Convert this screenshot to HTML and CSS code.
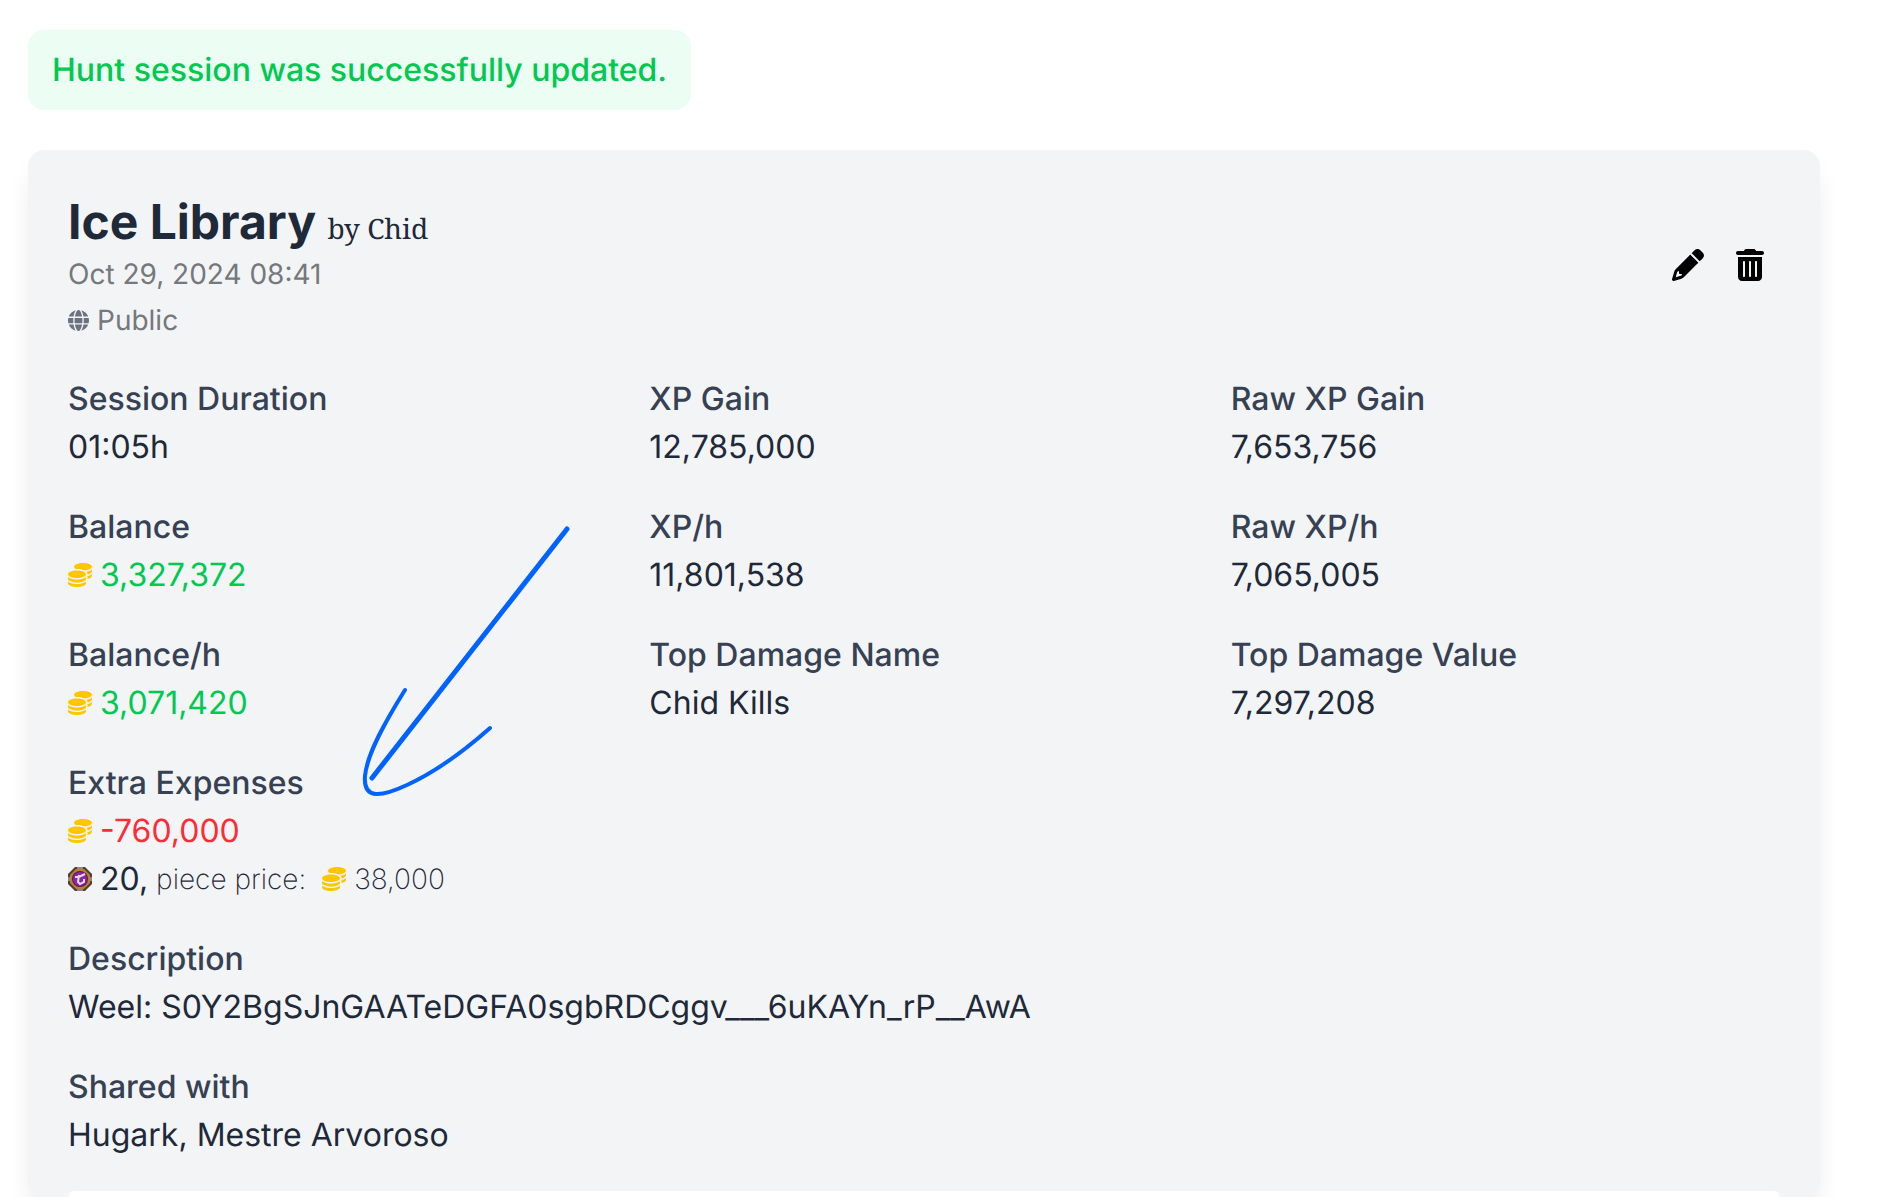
FILE: index.html
```html
<!DOCTYPE html>
<html lang="en">
<head>
    <meta charset="UTF-8">
    <meta name="viewport" content="width=device-width, initial-scale=1.0">
    <title>Ice Library - Hunt Session</title>
    <link rel="stylesheet" href="styles.css">
</head>
<body>
    <!-- Shared icon shapes -->
    <svg class="sprite" aria-hidden="true">
        <symbol id="coins" viewBox="0 0 512 512">
            <path d="M512 80c0 18-14.3 34.6-38.4 48c-29.1 16.1-72.5 27.5-122.3 30.9c-3.7-1.8-7.4-3.5-11.3-5C300.6 137.4 248.2 128 192 128c-8.3 0-16.4 .2-24.5 .6l-1.1-.6C142.3 114.6 128 98 128 80c0-44.2 86-80 192-80S512 35.8 512 80zM160.7 161.1c10.2-.7 20.7-1.1 31.3-1.1c62.2 0 117.4 12.3 152.5 31.4C369.3 204.9 384 221.7 384 240c0 4-.7 7.9-2.1 11.7c-4.6 13.2-17 25.3-35 35.5c-.4 .3-.9 .5-1.3 .7c-35 19.4-90.8 32-153.6 32c-59.6 0-112.9-11.3-148.2-29.1c-1.9-.9-3.7-1.9-5.5-2.9C14.3 274.6 0 258 0 240c0-34.8 53.4-64.5 128-75.4c10.5-1.5 21.4-2.7 32.7-3.5zM416 240c0-21.9-10.6-39.9-24.1-53.4c28.3-4.4 54.2-11.4 76.2-20.5c16.3-6.8 31.5-15.2 43.9-25.5V176c0 19.3-16.5 37.1-43.8 50.9c-14.6 7.4-32.4 13.7-52.4 18.5c.1-1.8 .2-3.5 .2-5.3zm-32 96c0 18-14.3 34.6-38.4 48c-1.8 1-3.6 1.9-5.5 2.9C304.9 404.7 251.6 416 192 416c-62.8 0-118.6-12.6-153.6-32C14.3 370.6 0 354 0 336V300.6c12.5 10.3 27.6 18.7 43.9 25.5C83.4 342.6 135.8 352 192 352s108.6-9.4 148.1-25.9c7.8-3.2 15.3-6.9 22.4-10.9c6.1-3.4 11.8-7.2 17.2-11.2c1.5-1.1 2.9-2.3 4.3-3.4V336zm32 0V278.1c19-4.2 36.5-9.5 52.1-16c16.3-6.8 31.5-15.2 43.9-25.5V272c0 10.5-5 21-14.9 30.9c-16.3 16.3-45 29.7-81.3 38.4c.1-1.7 .2-3.5 .2-5.3zM192 448c56.2 0 108.6-9.4 148.1-25.9c16.3-6.8 31.5-15.2 43.9-25.5V432c0 44.2-86 80-192 80S0 476.2 0 432V396.6c12.5 10.3 27.6 18.7 43.9 25.5C83.4 438.6 135.8 448 192 448z"/>
        </symbol>
    </svg>

    <p class="notice" role="status">Hunt session was successfully updated.</p>

    <main class="card">
        <header class="card-header">
            <div>
                <h1>Ice Library <small>by Chid</small></h1>
                <p class="date">Oct 29, 2024 08:41</p>
                <p class="visibility">
                    <svg class="icon-globe" viewBox="0 0 512 512" aria-hidden="true"><path d="M352 256c0 22.2-1.2 43.6-3.3 64H163.3c-2.2-20.4-3.3-41.8-3.3-64s1.2-43.6 3.3-64H348.7c2.2 20.4 3.3 41.8 3.3 64zm28.8-64H503.9c5.3 20.5 8.1 41.9 8.1 64s-2.8 43.5-8.1 64H380.8c2.1-20.6 3.2-42 3.2-64s-1.1-43.4-3.2-64zm112.6-32H376.7c-10-63.9-29.8-117.4-55.3-151.6c78.3 20.7 142 77.5 171.9 151.6zm-149.1 0H167.7c6.1-36.4 15.5-68.6 27-94.7c10.5-23.6 22.2-40.7 33.5-51.5C239.4 3.2 248.7 0 256 0s16.6 3.2 27.8 13.8c11.3 10.8 23 27.9 33.5 51.5c11.6 26 20.9 58.2 27 94.7zm-209 0H18.6C48.6 85.9 112.2 29.1 190.6 8.4C165.1 42.6 145.3 96.1 135.3 160zM8.1 192H131.2c-2.1 20.6-3.2 42-3.2 64s1.1 43.4 3.2 64H8.1C2.8 299.5 0 278.1 0 256s2.8-43.5 8.1-64zM194.7 446.6c-11.6-26-20.9-58.2-27-94.6H344.3c-6.1 36.4-15.5 68.6-27 94.6c-10.5 23.6-22.2 40.7-33.5 51.5C272.6 508.8 263.3 512 256 512s-16.6-3.2-27.8-13.8c-11.3-10.8-23-27.9-33.5-51.5zM135.3 352c10 63.9 29.8 117.4 55.3 151.6C112.2 482.9 48.6 426.1 18.6 352H135.3zm358.1 0c-30 74.1-93.6 130.9-171.9 151.6c25.5-34.2 45.2-87.7 55.3-151.6H493.4z"/></svg>
                    Public
                </p>
            </div>
            <div class="actions">
                <a href="#edit" aria-label="Edit">
                    <svg width="32" height="32" viewBox="0 0 512 512"><path d="M410.3 231l11.3-11.3-33.9-33.9-62.1-62.1L291.7 89.8l-11.3 11.3-22.6 22.6L58.6 322.9c-10.4 10.4-18 23.3-22.2 37.4L1 480.7c-2.5 8.4-.2 17.5 6.1 23.7s15.3 8.5 23.7 6.1l120.3-35.4c14.1-4.2 27-11.8 37.4-22.2L387.7 253.7 410.3 231zM160 399.4l-9.1 22.7c-4 3.1-8.5 5.4-13.3 6.9L59.4 452l23-78.1c1.4-4.9 3.8-9.4 6.9-13.3l22.7-9.1v32c0 8.8 7.2 16 16 16h32zM362.7 18.7L348.3 33.2 325.7 55.8 314.3 67.1l33.9 33.9 62.1 62.1 33.9 33.9 11.3-11.3 22.6-22.6 14.5-14.5c25-25 25-65.5 0-90.5L453.3 18.7c-25-25-65.5-25-90.5 0z"/></svg>
                </a>
                <button type="button" aria-label="Delete">
                    <svg width="28" height="32" viewBox="0 0 448 512"><path d="M135.2 17.7C140.6 6.8 151.7 0 163.8 0H284.2c12.1 0 23.2 6.8 28.6 17.7L320 32h96c17.7 0 32 14.3 32 32s-14.3 32-32 32H32C14.3 96 0 81.7 0 64S14.3 32 32 32h96l7.2-14.3zM32 128H416V448c0 35.3-28.7 64-64 64H96c-35.3 0-64-28.7-64-64V128zm96 64c-8.8 0-16 7.2-16 16V432c0 8.8 7.2 16 16 16s16-7.2 16-16V208c0-8.8-7.2-16-16-16zm96 0c-8.8 0-16 7.2-16 16V432c0 8.8 7.2 16 16 16s16-7.2 16-16V208c0-8.8-7.2-16-16-16zm96 0c-8.8 0-16 7.2-16 16V432c0 8.8 7.2 16 16 16s16-7.2 16-16V208c0-8.8-7.2-16-16-16z"/></svg>
                </button>
            </div>
        </header>

        <dl class="stats">
            <div>
                <dt>Session Duration</dt>
                <dd>01:05h</dd>
            </div>
            <div>
                <dt>XP Gain</dt>
                <dd>12,785,000</dd>
            </div>
            <div>
                <dt>Raw XP Gain</dt>
                <dd>7,653,756</dd>
            </div>
            <div>
                <dt>Balance</dt>
                <dd class="money profit"><svg class="icon-coins"><use href="#coins"/></svg>3,327,372</dd>
            </div>
            <div>
                <dt>XP/h</dt>
                <dd>11,801,538</dd>
            </div>
            <div>
                <dt>Raw XP/h</dt>
                <dd>7,065,005</dd>
            </div>
            <div>
                <dt>Balance/h</dt>
                <dd class="money profit"><svg class="icon-coins"><use href="#coins"/></svg>3,071,420</dd>
            </div>
            <div>
                <dt>Top Damage Name</dt>
                <dd>Chid Kills</dd>
            </div>
            <div>
                <dt>Top Damage Value</dt>
                <dd>7,297,208</dd>
            </div>
            <div class="wide">
                <dt>Extra Expenses</dt>
                <dd class="money loss"><svg class="icon-coins"><use href="#coins"/></svg>-760,000</dd>
                <dd class="money">
                    <svg class="icon-token" viewBox="0 0 24 24" aria-hidden="true">
                        <path fill="#4a4038" d="M7 0h10l7 7v10l-7 7H7l-7-7V7z"/>
                        <path fill="#c77a2c" d="M8 2h8l6 6v8l-6 6H8l-6-6V8z"/>
                        <path fill="#8c8a86" d="M9 0h6v2H9zM9 22h6v2H9zM0 10h2v4H0zM22 10h2v4h-2z"/>
                        <circle cx="12" cy="12" r="8" fill="#4f1a66"/>
                        <circle cx="12" cy="12" r="7" fill="#852b9c"/>
                        <path fill="none" stroke="#ecd5f2" stroke-width="2" d="M7 10h4l6-3M11 8l-1 7 2 2 4-2v-3"/>
                    </svg>
                    20,
                    <span class="piece">piece price:</span>
                    <span class="money piece price"><svg class="icon-coins"><use href="#coins"/></svg>38,000</span>
                </dd>
            </div>
            <div class="wide">
                <dt>Description</dt>
                <dd>Weel: S0Y2BgSJnGAATeDGFA0sgbRDCggv___6uKAYn_rP__AwA</dd>
            </div>
            <div class="wide">
                <dt>Shared with</dt>
                <dd>Hugark, Mestre Arvoroso</dd>
            </div>
        </dl>

        <section class="panel"></section>

        <!-- Hand drawn arrow pointing at the extra expenses -->
        <svg class="arrow" viewBox="0 0 220 280" aria-hidden="true">
            <path stroke-width="5" d="M212 9L17 258"/>
            <path stroke-width="4" d="M50 170C30 202 12 234 10 256C8 280 26 277 52 265C78 253 108 232 135 208"/>
        </svg>
    </main>
</body>
</html>
```

FILE: styles.css
```css
* {
    margin: 0;
    padding: 0;
    box-sizing: border-box;
}

body {
    font-family: Inter, "Liberation Sans", sans-serif;
    font-optical-sizing: none;
    text-rendering: geometricPrecision;
    font-size: 32px;
    line-height: 48px;
    color: #1e2939;
    background: #fff;
    min-height: 100vh;
    display: flex;
    flex-direction: column;
    gap: 40px;
    padding: 30px 67px 0 28px;
}

.sprite {
    position: absolute;
    width: 0;
    height: 0;
}

.notice {
    align-self: flex-start;
    padding: 16px 24px;
    border-radius: 16px;
    background: #ecfdf3;
    color: #00c950;
    font-weight: 500;
}

.card {
    position: relative;
    flex: 1;
    display: flex;
    flex-direction: column;
    gap: 32px;
    padding: 40px 40px 0;
    border-radius: 16px;
    background: #f3f4f6;
    box-shadow: 0 20px 30px -6px rgba(0, 0, 0, 0.1);
}

.card-header {
    display: flex;
    align-items: center;
    justify-content: space-between;
    margin-bottom: 3px;
}

.card-header h1 {
    font-size: 48px;
    line-height: 64px;
    font-weight: 700;
}

.card-header small {
    font-family: "Noto Serif", "DejaVu Serif", serif;
    font-size: 28px;
    line-height: 28px;
    font-weight: 400;
}

.date,
.visibility {
    font-size: 28px;
    line-height: 40px;
    color: #75787c;
}

.visibility {
    display: flex;
    align-items: center;
    gap: 8px;
    margin-top: 6px;
}

.icon-globe {
    width: 21px;
    height: 21px;
    fill: #6a7282;
}

.actions {
    display: flex;
    gap: 32px;
    padding-right: 16px;
}

.actions a,
.actions button {
    display: flex;
    border: none;
    background: none;
    color: #000;
    cursor: pointer;
}

.stats {
    display: grid;
    grid-template-columns: repeat(3, 1fr);
    gap: 32px;
}

.stats .wide {
    grid-column: 1 / -1;
}

.stats dt {
    color: #364153;
    font-weight: 500;
}

.money {
    display: flex;
    align-items: center;
    gap: 8px;
}

.profit {
    color: #00c950;
}

.loss {
    color: #fb2c36;
}

.icon-coins {
    width: 24px;
    height: 24px;
    fill: #fdc700;
}

.icon-token {
    width: 24px;
    height: 24px;
}

.piece {
    font-size: 28px;
    font-weight: 200;
}

.price {
    margin-left: 8px;
}

.panel {
    flex: 1;
    border-radius: 16px 16px 0 0;
    background: #fff;
}

.arrow {
    position: absolute;
    left: 327px;
    top: 370px;
    width: 220px;
    height: 280px;
    fill: none;
    stroke: #0062ff;
    stroke-linecap: round;
    pointer-events: none;
}
```
